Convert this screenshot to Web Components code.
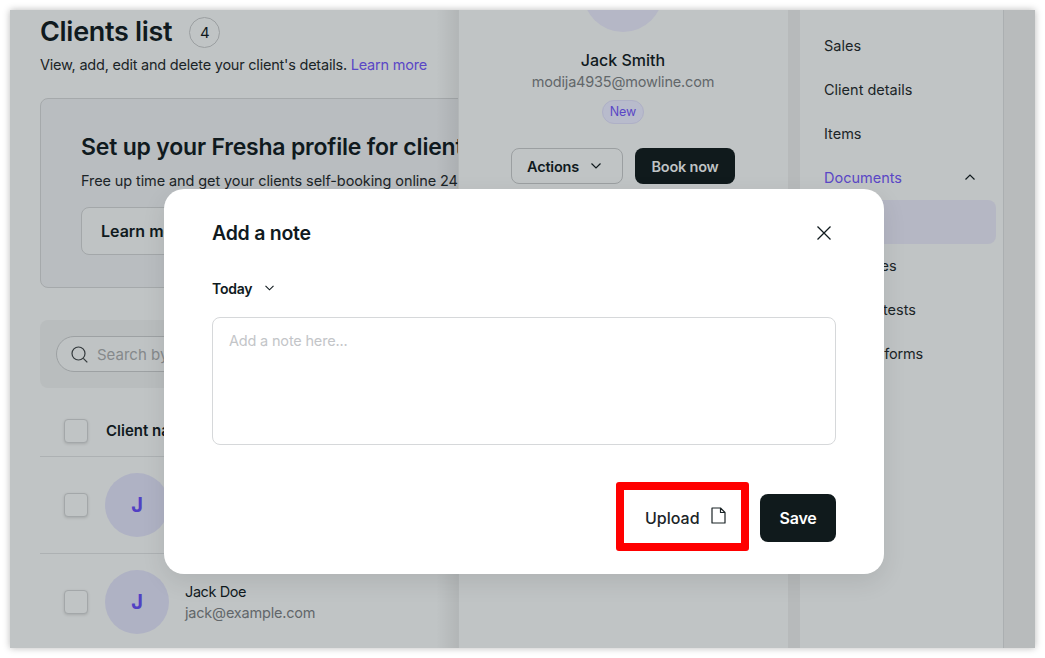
<!DOCTYPE html>
<html>
<head>
<meta charset="utf-8">
<title>Clients list</title>
<style>
  html, body { margin: 0; padding: 0; background: #fff; }
  body { width: 1045px; height: 658px; overflow: hidden; font-family: Inter, "Liberation Sans", sans-serif; color: #101a1e; }
</style>
</head>
<body>
<app-frame>
  <clients-list></clients-list>
  <client-profile></client-profile>
  <side-nav></side-nav>
  <note-modal slot="modal"></note-modal>
</app-frame>

<script>
class ShadowBase extends HTMLElement {
  constructor() {
    super();
    this.attachShadow({ mode: "open" });
    this.shadowRoot.innerHTML = this.render();
  }
}

class AppFrame extends ShadowBase {
  render() {
    return `
      <style>
        :host {
          display: block;
          position: relative;
          width: 1025px;
          height: 638px;
          margin: 10px;
          overflow: visible;
        }
        .frame {
          display: grid;
          grid-template-columns: 448px 330px 12px 203px 32px;
          width: 1025px;
          height: 638px;
          overflow: hidden;
          background: #c0c4c5;
          box-shadow: 0 0 7px rgba(0, 0, 0, .28);
        }
        .gap { background: #b7babb; }
        .strip { background: #b8bbbc; border-left: 1px solid #abafb1; }
        ::slotted(clients-list), ::slotted(client-profile), ::slotted(side-nav) { min-width: 0; }
        ::slotted(client-profile) { grid-column: 2; }
        ::slotted(side-nav) { grid-column: 4; }
      </style>
      <div class="frame">
        <slot></slot>
        <div class="gap" style="grid-column:3;grid-row:1"></div>
        <div class="strip" style="grid-column:5;grid-row:1"></div>
      </div>
      <slot name="modal"></slot>
    `;
  }
}

class CheckBox extends ShadowBase {
  render() {
    return `
      <style>
        :host {
          display: block;
          flex: none;
          width: 22px;
          height: 22px;
          border: 1px solid #a3a7a9;
          border-radius: 4px;
          background: #c0c4c5;
          box-shadow: 0 1px 3px rgba(0, 0, 0, .14);
        }
      </style>
    `;
  }
}

class ClientRow extends ShadowBase {
  render() {
    return `
      <style>
        :host {
          display: flex;
          align-items: center;
          height: 96px;
          padding-left: 24px;
          border-bottom: 1px solid #adb1b3;
        }
        :host([last]) { border-bottom: 0; }
        .avatar {
          display: flex;
          align-items: center;
          justify-content: center;
          flex: none;
          width: 64px;
          height: 64px;
          margin: 0 16px 0 17px;
          border-radius: 50%;
          background: #afb2c4;
          color: #5140c4;
          font-size: 20px;
          font-weight: 700;
        }
        .name { font-size: 14.5px; line-height: 20px; letter-spacing: -.4px; color: #101a1e; }
        .mail { font-size: 14.5px; line-height: 21px; letter-spacing: -.2px; color: #62676a; }
      </style>
      <check-box></check-box>
      <div class="avatar">J</div>
      <div>
        <div class="name">${this.getAttribute("name")}</div>
        <div class="mail">${this.getAttribute("mail")}</div>
      </div>
    `;
  }
}

class ClientsList extends ShadowBase {
  render() {
    return `
      <style>
        :host {
          display: block;
          position: relative;
          padding: 0 0 0 30px;
          overflow: hidden;
        }
        .head { display: flex; align-items: center; gap: 17px; height: 44px; }
        h1 { margin: 0; font-size: 27px; line-height: 44px; font-weight: 600; letter-spacing: -.3px; }
        .count {
          display: flex;
          align-items: center;
          justify-content: center;
          width: 29px;
          height: 29px;
          border: 1px solid #9b9fa1;
          border-radius: 50%;
          font-size: 15px;
        }
        .sub { margin: 0; font-size: 14.5px; line-height: 22px; white-space: nowrap; letter-spacing: -.22px; color: #1b2427; }
        .sub span { color: #5a47c6; }
        .banner {
          box-sizing: border-box;
          width: 500px;
          height: 190px;
          margin-top: 22px;
          padding: 30px 40px;
          border: 1px solid #a5a9ab;
          border-radius: 8px;
          background: #b9bdc0;
        }
        h2 { margin: 0; font-size: 23px; line-height: 36px; font-weight: 600; white-space: nowrap; letter-spacing: -.2px; }
        .banner p { margin: 0; padding-top: 5px; font-size: 14.5px; line-height: 22px; white-space: nowrap; letter-spacing: -.1px; color: #1b2427; }
        .learn {
          display: flex;
          align-items: center;
          box-sizing: border-box;
          width: 130px;
          height: 48px;
          margin-top: 15px;
          padding-left: 19px;
          border: 1px solid #a3a7a9;
          border-radius: 8px;
          font-size: 16px;
          font-weight: 600;
          background: #bfc3c4;
        }
        .search {
          display: flex;
          align-items: center;
          box-sizing: border-box;
          width: 500px;
          height: 68px;
          margin-top: 32px;
          padding: 0 16px;
          border-radius: 8px;
          background: #b9bdbe;
        }
        .pill {
          display: flex;
          align-items: center;
          gap: 9px;
          box-sizing: border-box;
          width: 300px;
          height: 36px;
          padding-left: 14px;
          border: 1px solid #9da1a3;
          border-radius: 18px;
          background: #bfc3c4;
          color: #85898b;
          font-size: 15px;
          white-space: nowrap;
        }
        .columns {
          display: flex;
          align-items: center;
          gap: 18px;
          box-sizing: border-box;
          height: 69px;
          padding: 17px 0 0 24px;
          border-bottom: 1px solid #adb1b3;
          font-size: 15px;
          font-weight: 600;
          white-space: nowrap;
        }
        .shade {
          position: absolute;
          top: 0;
          right: 0;
          bottom: 0;
          width: 22px;
          background: linear-gradient(to right, rgba(0, 0, 0, 0), rgba(0, 0, 0, .07));
        }
      </style>
      <div class="head"><h1>Clients list</h1><div class="count">4</div></div>
      <p class="sub">View, add, edit and delete your client's details. <span>Learn more</span></p>
      <div class="banner">
        <h2>Set up your Fresha profile for clients</h2>
        <p>Free up time and get your clients self-booking online 24/7.</p>
        <div class="learn">Learn more</div>
      </div>
      <div class="search">
        <div class="pill">
          <svg width="17" height="17" viewBox="0 0 17 17" fill="none" stroke="#33393c" stroke-width="1.2"><circle cx="7.5" cy="7.5" r="6.5"/><path d="M12.3 12.3 16.3 16.3"/></svg>
          Search by name
        </div>
      </div>
      <div class="columns"><check-box></check-box>Client name</div>
      <client-row name="Jack Smith" mail="modija4935@mowline.com"></client-row>
      <client-row last name="Jack Doe" mail="jack@example.com"></client-row>
      <div class="shade"></div>
    `;
  }
}

class ClientProfile extends ShadowBase {
  render() {
    return `
      <style>
        :host {
          display: flex;
          flex-direction: column;
          align-items: center;
          position: relative;
          box-shadow: inset 1px 0 0 #b3b7b8;
          overflow: hidden;
        }
        .avatar { flex: none; width: 80px; height: 80px; margin-top: -58px; border-radius: 50%; background: #b5b7c6; }
        .name { margin-top: 16px; font-size: 16px; line-height: 24px; font-weight: 500; }
        .mail { font-size: 14.5px; line-height: 20px; letter-spacing: -.18px; color: #62676a; }
        .tag {
          box-sizing: border-box;
          height: 24px;
          margin-top: 8px;
          padding: 0 7px;
          border: 1px solid #aeb0c6;
          border-radius: 12px;
          background: #b8bbcc;
          color: #5a47c6;
          font-size: 12.5px;
          line-height: 22px;
        }
        .actions { display: flex; gap: 12px; margin-top: 24px; }
        .btn {
          display: flex;
          align-items: center;
          justify-content: center;
          box-sizing: border-box;
          height: 36px;
          border-radius: 8px;
          font-size: 14.5px;
          font-weight: 600;
          letter-spacing: -.2px;
        }
        .ghost { justify-content: flex-start; width: 112px; gap: 12px; padding-left: 15px; border: 1px solid #9b9fa1; }
        .dark { width: 100px; background: #101a1c; color: #bfc3c4; }
      </style>
      <div class="avatar"></div>
      <div class="name">Jack Smith</div>
      <div class="mail">modija4935@mowline.com</div>
      <div class="tag">New</div>
      <div class="actions">
        <div class="btn ghost">Actions
          <svg width="10" height="6" viewBox="0 0 10 6" fill="none" stroke="#101a1e" stroke-width="1.2"><path d="M.5.5 5 5 9.5.5"/></svg>
        </div>
        <div class="btn dark">Book now</div>
      </div>
    `;
  }
}

class SideNav extends ShadowBase {
  render() {
    return `
      <style>
        :host {
          display: block;
          padding: 13px 7px 0 12px;
          font-size: 14.5px;
          color: #1b2427;
        }
        .item { display: flex; align-items: center; justify-content: space-between; height: 44px; padding: 0 21px 0 12px; border-radius: 8px; }
        .open { color: #5a47c6; }
        .child { padding-left: 28px; }
        .active { background: #b5b7c4; margin-top: 1px; margin-bottom: -1px; }
      </style>
      <div class="item">Sales</div>
      <div class="item">Client details</div>
      <div class="item">Items</div>
      <div class="item open">Documents
        <svg width="10" height="6" viewBox="0 0 10 6" fill="none" stroke="#101a1e" stroke-width="1.2"><path d="M.5 5.5 5 1 9.5 5.5"/></svg>
      </div>
      <div class="item child active">Notes</div>
      <div class="item child">Invoices</div>
      <div class="item child">Patch tests</div>
      <div class="item child" style="letter-spacing:-.18px">Intake forms</div>
    `;
  }
}

class NoteModal extends ShadowBase {
  render() {
    return `
      <style>
        :host {
          display: block;
          position: absolute;
          left: 154px;
          top: 179px;
          box-sizing: border-box;
          width: 720px;
          height: 385px;
          padding: 24px 48px 0;
          border-radius: 20px;
          background: #fff;
          box-shadow: 0 8px 24px rgba(0, 0, 0, .09);
        }
        .top { display: flex; align-items: center; justify-content: space-between; height: 40px; }
        h3 { margin: 0; font-size: 19.5px; font-weight: 600; letter-spacing: -.25px; color: #101a1e; }
        .date { display: flex; align-items: center; gap: 13px; height: 20px; margin-top: 25px; font-size: 14px; font-weight: 600; letter-spacing: -.25px; color: #101a1e; }
        .note {
          box-sizing: border-box;
          height: 128px;
          margin-top: 19px;
          padding: 13px 16px;
          border: 1px solid #d6d8da;
          border-radius: 8px;
          color: #c3c5c8;
          font-size: 14.5px;
          line-height: 20px;
          letter-spacing: -.18px;
        }
        .foot { display: flex; justify-content: flex-end; gap: 11px; margin-top: 37px; }
        .upload {
          display: flex;
          align-items: center;
          gap: 11px;
          box-sizing: border-box;
          width: 133px;
          height: 69px;
          padding: 3px 0 0 21px;
          border: 8px solid #f00;
          border-radius: 3px;
          font-size: 16px;
          font-weight: 500;
          color: #1b2427;
        }
        .save {
          display: flex;
          align-items: center;
          justify-content: center;
          width: 76px;
          height: 48px;
          margin-top: 12px;
          border-radius: 8px;
          background: #101a1c;
          color: #fff;
          font-size: 16px;
          font-weight: 600;
          letter-spacing: -.2px;
        }
      </style>
      <div class="top">
        <h3>Add a note</h3>
        <svg width="14" height="14" viewBox="0 0 14 14" fill="none" stroke="#101a1e" stroke-width="1.3" style="margin-right:5px"><path d="M.5.5 13.5 13.5M13.5.5 .5 13.5"/></svg>
      </div>
      <div class="date">Today
        <svg width="9" height="6" viewBox="0 0 9 6" fill="none" stroke="#101a1e" stroke-width="1.1"><path d="M.5.8 4.5 4.8 8.5.8"/></svg>
      </div>
      <div class="note">Add a note here...</div>
      <div class="foot">
        <div class="upload">Upload
          <svg width="15" height="17" viewBox="0 0 15 17" fill="none" stroke="#1b2427" stroke-width="1.2" stroke-linejoin="round" style="margin-top:-5px"><path d="M1 1H9.5L14 5.5V16H1ZM9.5 1V5.5H14"/></svg>
        </div>
        <div class="save">Save</div>
      </div>
    `;
  }
}

customElements.define("app-frame", AppFrame);
customElements.define("check-box", CheckBox);
customElements.define("client-row", ClientRow);
customElements.define("clients-list", ClientsList);
customElements.define("client-profile", ClientProfile);
customElements.define("side-nav", SideNav);
customElements.define("note-modal", NoteModal);
</script>
</body>
</html>
